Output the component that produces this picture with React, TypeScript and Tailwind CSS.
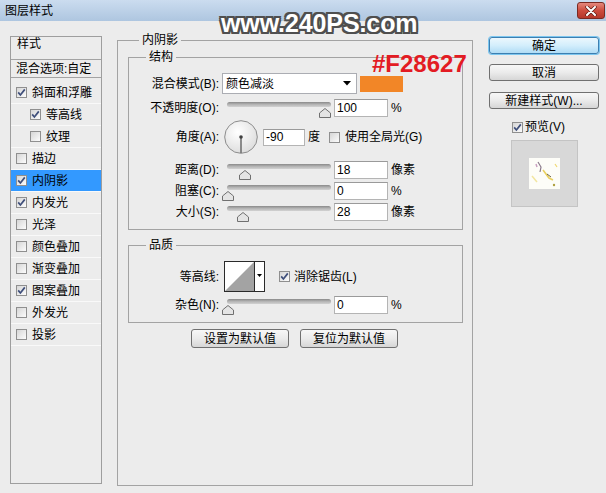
import React from "react";

const FONT = "font-['Liberation_Sans','Noto_Sans_CJK_SC',sans-serif]";

function Check({ on }: { on?: boolean }) {
  return (
    <span className="flex h-[11px] w-[11px] shrink-0 items-center justify-center border border-[#8f8f8f] bg-linear-to-br from-[#d6d6d6] to-[#fcfcfc]">
      {on && (
        <svg width="9" height="9" viewBox="0 0 9 9">
          <path d="M1.2 4.4 L3.4 7 L7.8 1.4" fill="none" stroke="#3f4f7b" strokeWidth="1.7" />
        </svg>
      )}
    </span>
  );
}

function Slider({ pos }: { pos: number }) {
  return (
    <div className="relative h-[18px] w-[104px] shrink-0">
      <div className="mt-[5px] h-[5px] w-full rounded-full bg-linear-to-b from-[#8a8a8a] via-[#b5b5b5] to-[#d2d2d2]" />
      <svg className="absolute top-[6px]" style={{ left: pos - 6 }} width="12" height="10" viewBox="0 0 12 10">
        <path d="M0.5 9.5 V5 L6 0.5 L11.5 5 V9.5 Z" fill="#e4e4e4" stroke="#707070" />
      </svg>
    </div>
  );
}

function Input({ v, w = 54, h = 18 }: { v: string; w?: number; h?: number }) {
  return (
    <div
      className="flex shrink-0 items-center border border-[#b4b4b4] border-t-[#9a9a9a] bg-white pl-[2px] leading-[14px]"
      style={{ width: w, height: h }}
    >
      {v}
    </div>
  );
}

function Label({ t }: { t: string }) {
  return <div className="w-[90px] shrink-0 text-right leading-[14px]">{t}</div>;
}

function Legend({ t, ml }: { t: string; ml: string }) {
  return <div className={`-mt-[8px] w-fit bg-[#ececec] px-[3px] leading-[14px] ${ml}`}>{t}</div>;
}

function Btn({ t, w, h = 19 }: { t: string; w: number; h?: number }) {
  return (
    <div
      className="flex items-center justify-center rounded-[3px] border border-[#707070] bg-linear-to-b from-[#f7f7f7] via-[#ebebeb] to-[#d6d6d6] leading-[14px]"
      style={{ width: w, height: h }}
    >
      {t}
    </div>
  );
}

const items: { t: string; on?: boolean; indent?: boolean; active?: boolean }[] = [
  { t: "斜面和浮雕", on: true },
  { t: "等高线", on: true, indent: true },
  { t: "纹理", indent: true },
  { t: "描边" },
  { t: "内阴影", on: true, active: true },
  { t: "内发光", on: true },
  { t: "光泽" },
  { t: "颜色叠加" },
  { t: "渐变叠加" },
  { t: "图案叠加", on: true },
  { t: "外发光" },
  { t: "投影" },
];

export default function App() {
  return (
    <div className={`relative h-[493px] w-[606px] overflow-hidden bg-[#ececec] text-[12px] text-black ${FONT}`}>
      {/* title bar */}
      <div className="flex h-[21px] items-center justify-between bg-linear-to-b from-[#cbdcef] to-[#aec6e0] pl-[5px] pr-[1px]">
        <span className="leading-[14px]">图层样式</span>
        <div className="flex h-[17px] w-[28px] items-center justify-center rounded-[3px] border border-[#7a2a22] bg-linear-to-b from-[#e4887d] via-[#cd4c3e] to-[#b5372a]">
          <svg width="12" height="10" viewBox="0 0 12 10">
            <path d="M2 1 L10 9 M10 1 L2 9" stroke="#5a1a14" strokeWidth="3.4" strokeLinecap="round" />
            <path d="M2 1 L10 9 M10 1 L2 9" stroke="#ffffff" strokeWidth="2" strokeLinecap="round" />
          </svg>
        </div>
      </div>

      {/* body */}
      <div className="flex items-start pl-[10px]">
        {/* left list */}
        <div className="mt-[15px] h-[448px] w-[92px] shrink-0 border border-[#9e9e9e]">
          <div className="h-[23px] border-b border-[#a3a3a3] pl-[6px] leading-[14px]">样式</div>
          <div className="flex h-[18px] items-center border-b border-[#a3a3a3] pl-[5px] leading-[14px]">混合选项:自定</div>
          <div className="mt-[4px] flex flex-col">
            {items.map((it) => (
              <div
                key={it.t}
                className={`flex h-[22px] items-center gap-[5px] border-b border-[#f9f9f9] ${it.indent ? "pl-[19px]" : "pl-[5px]"} ${it.active ? "bg-[#3399ff]" : ""}`}
              >
                <Check on={it.on} />
                <span className="leading-[14px]">{it.t}</span>
              </div>
            ))}
          </div>
        </div>

        {/* main group */}
        <div className="ml-[15px] mt-[19px] h-[446px] w-[356px] shrink-0 border border-[#a3a3a3]">
          <Legend t="内阴影" ml="ml-[21px]" />

          {/* 结构 */}
          <div className="ml-[10px] mt-[10px] w-[335px] border border-[#a3a3a3] pb-[8px]">
            <Legend t="结构" ml="ml-[17px]" />
            <div className="mt-[9px] flex h-[21px] items-center">
              <Label t="混合模式(B):" />
              <div className="ml-[3px] flex h-[21px] w-[135px] items-center justify-between border border-[#abadb3] bg-white pl-[3px] pr-[5px]">
                <span className="leading-[14px]">颜色减淡</span>
                <svg width="8" height="5" viewBox="0 0 8 5">
                  <path d="M0 0 H8 L4 4.5 Z" fill="#000" />
                </svg>
              </div>
              <div className="ml-[3px] h-[16px] w-[43px] bg-[#f28627]" />
            </div>
            <div className="mt-[5px] flex h-[18px] items-center">
              <Label t="不透明度(O):" />
              <div className="ml-[8px]">
                <Slider pos={98} />
              </div>
              <div className="ml-[3px]">
                <Input v="100" />
              </div>
              <span className="ml-[3px] leading-[14px]">%</span>
            </div>
            <div className="mt-[3px] flex h-[34px] items-center">
              <Label t="角度(A):" />
              <svg className="ml-[5px] shrink-0" width="34" height="34" viewBox="0 0 34 34">
                <defs>
                  <radialGradient id="dial" cx="40%" cy="35%" r="70%">
                    <stop offset="0%" stopColor="#ffffff" />
                    <stop offset="100%" stopColor="#dcdcdc" />
                  </radialGradient>
                </defs>
                <circle cx="17" cy="17" r="16.3" fill="url(#dial)" stroke="#8c8c8c" />
                <line x1="17" y1="17" x2="17" y2="33" stroke="#6a6a6a" strokeWidth="1.5" />
                <circle cx="17" cy="17" r="1.8" fill="#404040" />
              </svg>
              <div className="ml-[5px]">
                <Input v="-90" w={42} h={17} />
              </div>
              <span className="ml-[3px] leading-[14px]">度</span>
              <span className="ml-[9px]">
                <Check />
              </span>
              <span className="ml-[5px] leading-[14px]">使用全局光(G)</span>
            </div>
            <div className="mt-[7px] flex h-[18px] items-center">
              <Label t="距离(D):" />
              <div className="ml-[8px]">
                <Slider pos={18} />
              </div>
              <div className="ml-[3px]">
                <Input v="18" />
              </div>
              <span className="ml-[3px] leading-[14px]">像素</span>
            </div>
            <div className="mt-[3px] flex h-[18px] items-center">
              <Label t="阻塞(C):" />
              <div className="ml-[8px]">
                <Slider pos={1} />
              </div>
              <div className="ml-[3px]">
                <Input v="0" />
              </div>
              <span className="ml-[3px] leading-[14px]">%</span>
            </div>
            <div className="mt-[3px] flex h-[18px] items-center">
              <Label t="大小(S):" />
              <div className="ml-[8px]">
                <Slider pos={16} />
              </div>
              <div className="ml-[3px]">
                <Input v="28" />
              </div>
              <span className="ml-[3px] leading-[14px]">像素</span>
            </div>
          </div>

          {/* 品质 */}
          <div className="ml-[10px] mt-[15px] w-[335px] border border-[#a3a3a3] pb-[8px]">
            <Legend t="品质" ml="ml-[17px]" />
            <div className="mt-[9px] flex h-[31px] items-center">
              <Label t="等高线:" />
              <svg className="ml-[5px] shrink-0" width="41" height="31" viewBox="0 0 41 31">
                <rect x="0.5" y="0.5" width="40" height="30" fill="#ffffff" stroke="#2a2a2a" />
                <polygon points="1,30 30,1 30,30" fill="#a3a3a3" />
                <line x1="30.5" y1="0.5" x2="30.5" y2="30.5" stroke="#2a2a2a" />
                <path d="M33 13 H38 L35.5 16 Z" fill="#000" />
              </svg>
              <span className="ml-[14px]">
                <Check on />
              </span>
              <span className="ml-[4px] leading-[14px]">消除锯齿(L)</span>
            </div>
            <div className="mt-[4px] flex h-[18px] items-center">
              <Label t="杂色(N):" />
              <div className="ml-[8px]">
                <Slider pos={1} />
              </div>
              <div className="ml-[3px]">
                <Input v="0" />
              </div>
              <span className="ml-[3px] leading-[14px]">%</span>
            </div>
          </div>

          <div className="mt-[6px] flex justify-center gap-[11px] pr-[1px]">
            <Btn t="设置为默认值" w={98} />
            <Btn t="复位为默认值" w={98} />
          </div>
        </div>

        {/* right column */}
        <div className="ml-[16px] mt-[16px] flex w-[110px] shrink-0 flex-col">
          <div className="flex h-[17px] w-[110px] items-center justify-center rounded-[3px] border border-[#3c7fb1] bg-linear-to-b from-[#ecf7fd] via-[#d3eefc] to-[#b0dcf5] leading-[14px] shadow-[0_0_0_1px_#7cc6ef]">
            确定
          </div>
          <div className="mt-[10px]">
            <Btn t="取消" w={110} h={17} />
          </div>
          <div className="mt-[11px]">
            <Btn t="新建样式(W)..." w={110} h={17} />
          </div>
          <div className="ml-[23px] mt-[11px] flex h-[14px] items-center gap-[2px]">
            <Check on />
            <span className="leading-[14px]">预览(V)</span>
          </div>
          <div className="ml-[22px] mt-[6px] flex h-[67px] w-[67px] items-center justify-center border border-[#c4c4c4] bg-[#d8d8d8]">
            <svg width="31" height="31" viewBox="0 0 31 31">
              <rect width="31" height="31" fill="#fdfdf8" />
              <path d="M9 4 L12 9 L11 14" stroke="#8a7a8a" strokeWidth="1.2" fill="none" />
              <path d="M7 6 L8 9" stroke="#c9a0c0" strokeWidth="1.5" />
              <path d="M14 12 L20 20 L24 22" stroke="#e9d060" strokeWidth="1.6" fill="none" />
              <path d="M18 16 L22 19" stroke="#6a6040" strokeWidth="1" />
              <path d="M3 18 L8 24" stroke="#f2e6a0" strokeWidth="1.5" />
              <circle cx="25" cy="27" r="1.2" fill="#b0a040" />
              <path d="M26 6 L28 9" stroke="#f0d870" strokeWidth="1.2" />
            </svg>
          </div>
        </div>
      </div>

      {/* watermark overlay */}
      <div className="absolute left-[221px] top-[8px] text-[25px] leading-[30px] font-bold tracking-[-0.1px] text-white [text-shadow:2px_0_#4f4f4f,-2px_0_#4f4f4f,0_2px_#4f4f4f,0_-2px_#4f4f4f,2px_2px_#4f4f4f,-2px_-2px_#4f4f4f,2px_-2px_#4f4f4f,-2px_2px_#4f4f4f]">
        www.240PS.com
      </div>
      {/* color annotation */}
      <div className="absolute left-[372px] top-[52px] text-[24px] leading-[24px] font-bold text-[#e31b23]">
        #F28627
      </div>
    </div>
  );
}
